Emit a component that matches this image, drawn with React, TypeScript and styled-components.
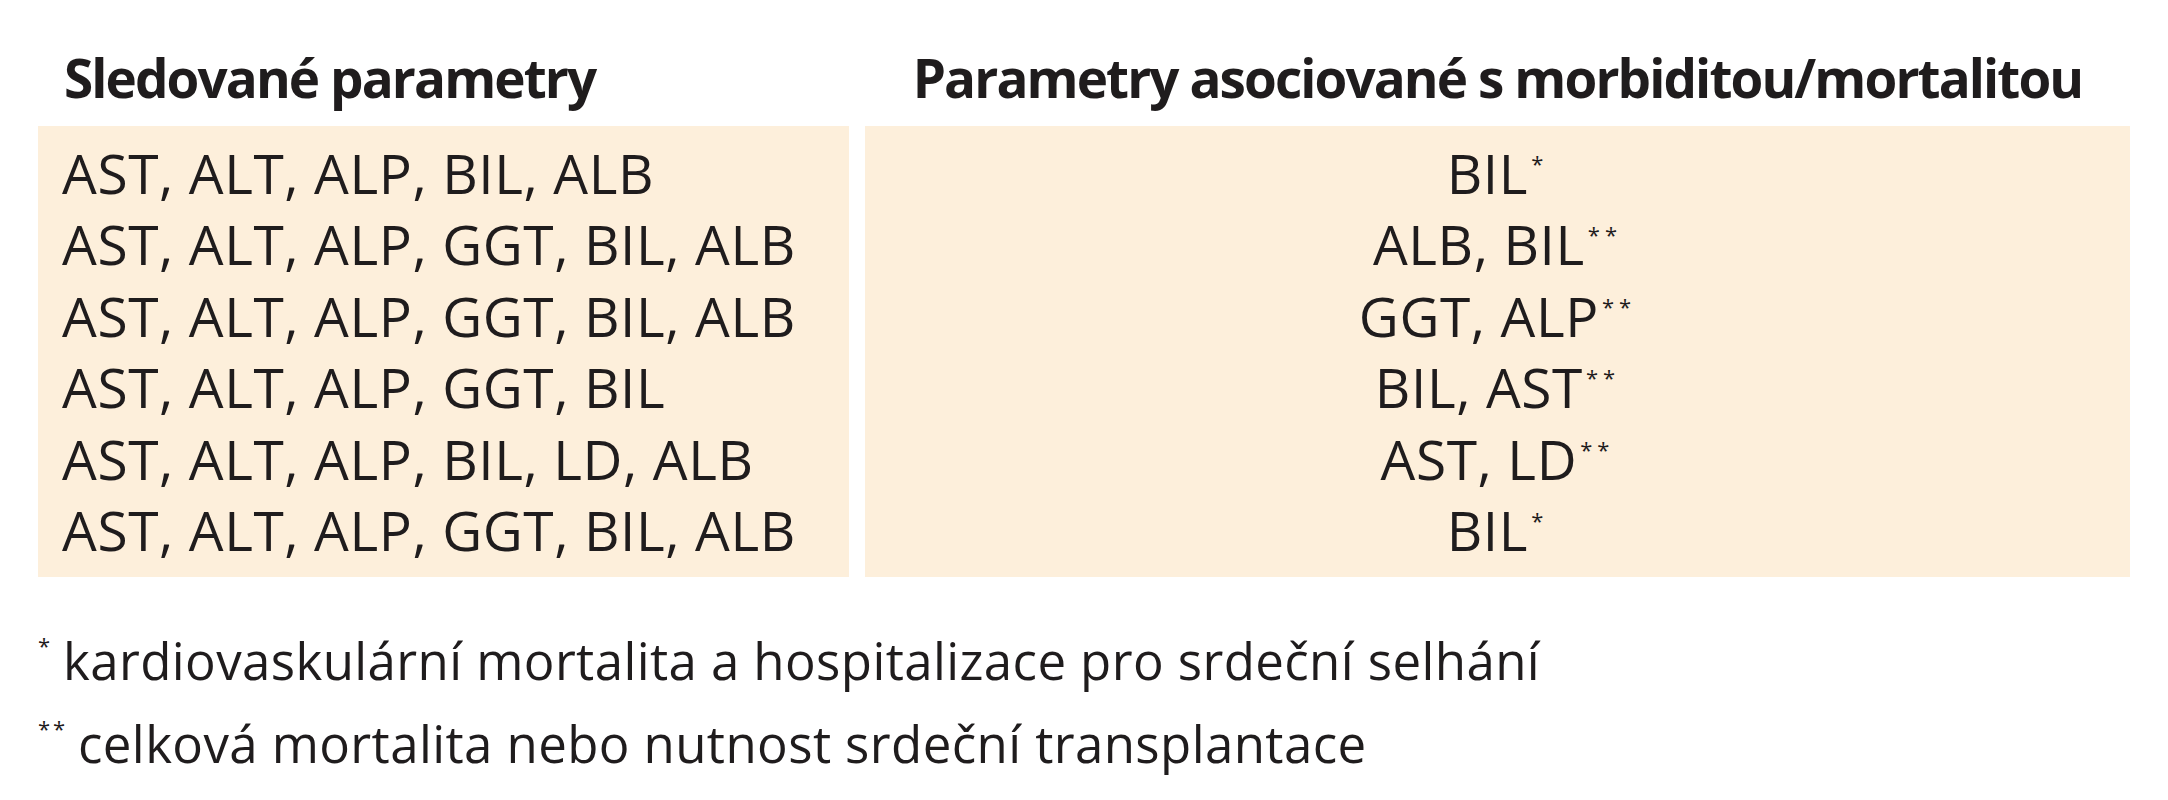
import styled, { createGlobalStyle } from 'styled-components';

const GlobalStyle = createGlobalStyle`
	html, body {
		margin: 0;
		padding: 0;
		background: #ffffff;
	}
	body {
		font-family: 'Open Sans', 'Noto Sans', sans-serif;
		color: #1f1c1d;
	}
`;

const panelColor = '#fdefdb';

interface IRow {
	tracked: string;
	associated: string;
	mark: 1 | 2;
}

const rows: IRow[] = [
	{ tracked: 'AST, ALT, ALP, BIL, ALB', associated: 'BIL', mark: 1 },
	{ tracked: 'AST, ALT, ALP, GGT, BIL, ALB', associated: 'ALB, BIL', mark: 2 },
	{ tracked: 'AST, ALT, ALP, GGT, BIL, ALB', associated: 'GGT, ALP', mark: 2 },
	{ tracked: 'AST, ALT, ALP, GGT, BIL', associated: 'BIL, AST', mark: 2 },
	{ tracked: 'AST, ALT, ALP, BIL, LD, ALB', associated: 'AST, LD', mark: 2 },
	{ tracked: 'AST, ALT, ALP, GGT, BIL, ALB', associated: 'BIL', mark: 1 }
];

const notes = [
	{ mark: 1, text: 'kardiovaskulární mortalita a hospitalizace pro srdeční selhání' },
	{ mark: 2, text: 'celková mortalita nebo nutnost srdeční transplantace' }
];

const Page = styled.div`
	padding: 46px 0 0 38px;
`;

const Table = styled.div`
	display: grid;
	grid-template-columns: 811px 1265px;
	column-gap: 16px;
	row-gap: 16px;
`;

const HeadCell = styled.div<{ $center?: boolean }>`
	font-size: 53px;
	font-weight: 700;
	line-height: 64px;
	letter-spacing: -1.9px;
	padding-left: ${({ $center }) => ($center ? '0' : '26px')};
	text-align: ${({ $center }) => ($center ? 'center' : 'left')};
	white-space: nowrap;
`;

const Panel = styled.div<{ $center?: boolean }>`
	background: ${panelColor};
	padding: 11px 0 12px ${({ $center }) => ($center ? '0' : '24px')};
	display: flex;
	flex-direction: column;
	align-items: ${({ $center }) => ($center ? 'center' : 'flex-start')};
`;

const Line = styled.div`
	font-size: 55px;
	line-height: 71.4px;
	letter-spacing: 0.6px;
	white-space: nowrap;
`;

const Mark = styled.span`
	font-size: 22px;
	letter-spacing: 5px;
	vertical-align: 22px;
	line-height: 0;
	margin-left: 3px;
`;

const Notes = styled.div`
	margin-top: 42px;
	display: flex;
	flex-direction: column;
`;

const Note = styled.div`
	font-size: 51px;
	line-height: 83px;
	letter-spacing: 0.4px;
	white-space: nowrap;
`;

const NoteMark = styled.span<{ $width: number }>`
	display: inline-block;
	width: ${({ $width }) => $width}px;
	font-size: 22px;
	letter-spacing: 3px;
	vertical-align: 26px;
	line-height: 0;
`;

const stars = (n: number) => '*'.repeat(n);

export default function App() {
	return (
		<>
			<GlobalStyle />
			<Page>
				<Table>
					<HeadCell>Sledované parametry</HeadCell>
					<HeadCell $center>Parametry asociované s morbiditou/mortalitou</HeadCell>
					<Panel>
						{rows.map((row, i) => (
							<Line key={i}>{row.tracked}</Line>
						))}
					</Panel>
					<Panel $center>
						{rows.map((row, i) => (
							<Line key={i}>
								{row.associated}
								<Mark>{stars(row.mark)}</Mark>
							</Line>
						))}
					</Panel>
				</Table>
				<Notes>
					{notes.map((note) => (
						<Note key={note.mark}>
							<NoteMark $width={note.mark === 1 ? 25 : 40}>{stars(note.mark)}</NoteMark>
							{note.text}
						</Note>
					))}
				</Notes>
			</Page>
		</>
	);
}
